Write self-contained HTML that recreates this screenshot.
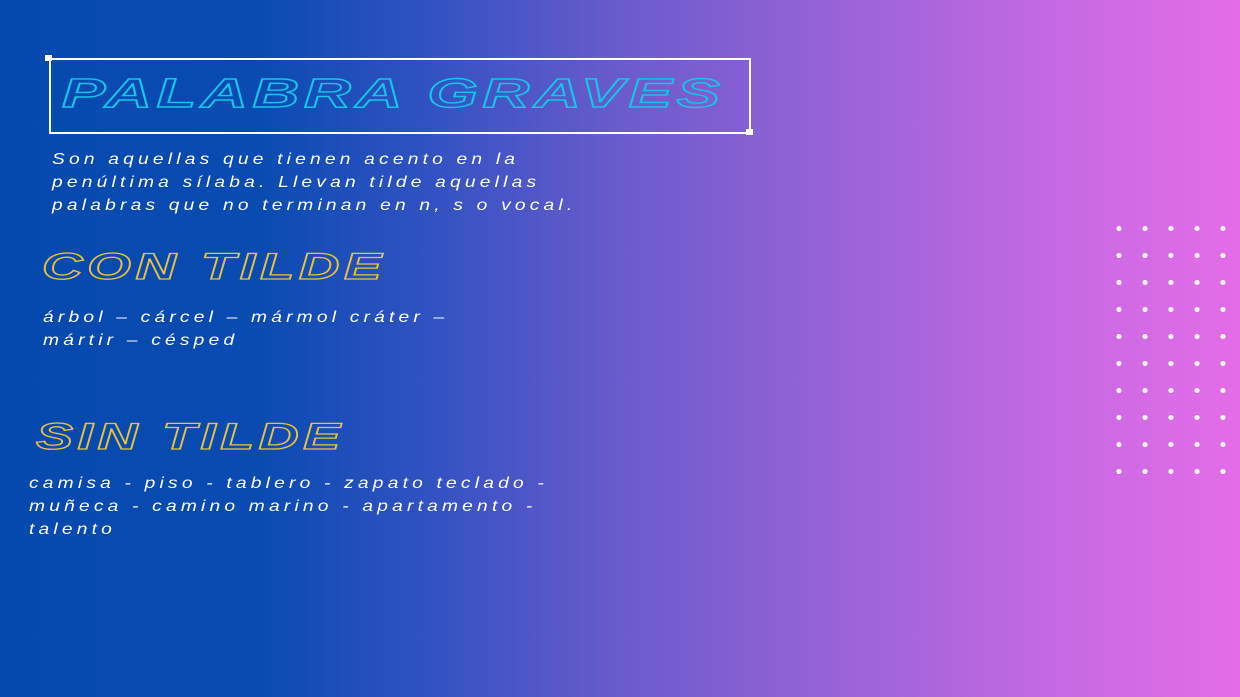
<!DOCTYPE html>
<html><head><meta charset="utf-8"><style>
html,body{margin:0;padding:0}
body{width:1240px;height:697px;overflow:hidden;position:relative;font-family:"Liberation Sans",sans-serif;
background:linear-gradient(90deg,#0649ae 0%,#0a4bb2 21%,#3352c2 35%,#6a5bcc 50%,#9a63d8 68%,#c569e2 85%,#e46ce8 100%);}
.box{position:absolute;left:49px;top:58px;width:698px;height:72px;border:2px solid #fff;}
.sq{position:absolute;width:7px;height:6px;background:#fff}
.h{position:absolute;font-weight:bold;font-style:italic;color:transparent;white-space:nowrap;transform-origin:0 0;letter-spacing:3px}
.t{position:absolute;color:#fff;font-style:italic;font-size:16px;letter-spacing:3.5px;line-height:23px;white-space:nowrap;transform:scaleX(1.2);transform-origin:0 0}
.dots{position:absolute;left:1106px;top:215px;width:130px;height:270px;
background-image:radial-gradient(circle,#fff 2.3px,transparent 2.8px);background-size:26px 27px;}
</style></head><body>
<div class="box"></div>
<div class="sq" style="left:45px;top:55px"></div>
<div class="sq" style="left:746px;top:129px"></div>
<div class="h" style="left:62px;top:70px;font-size:41px;-webkit-text-stroke:1.4px #15c6e8;transform:scaleX(1.58)">PALABRA GRAVES</div>
<div class="t" style="left:52px;top:148px">Son aquellas que tienen acento en la<br>penúltima sílaba. Llevan tilde aquellas<br>palabras que no terminan en n, s o vocal.</div>
<div class="h" style="left:42px;top:246px;font-size:37px;-webkit-text-stroke:1.3px #e9c43a;transform:scaleX(1.52)">CON TILDE</div>
<div class="t" style="left:43px;top:306px">árbol – cárcel – mármol cráter –<br>mártir – césped</div>
<div class="h" style="left:36px;top:416px;font-size:37px;-webkit-text-stroke:1.3px #e9c43a;transform:scaleX(1.5)">SIN TILDE</div>
<div class="t" style="left:29px;top:472px">camisa - piso - tablero - zapato teclado -<br>muñeca - camino marino - apartamento -<br>talento</div>
<div class="dots"></div>
</body></html>
